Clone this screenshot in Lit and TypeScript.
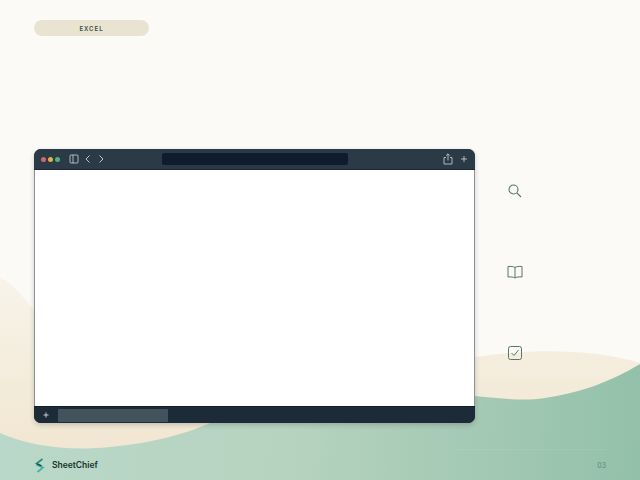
import { LitElement, html, css, svg } from "lit";
import { customElement } from "lit/decorators.js";

@customElement("app-root")
export class AppRoot extends LitElement {
  static styles = css`
    :host {
      display: block;
      position: relative;
      width: 640px;
      height: 480px;
      overflow: hidden;
      background: #fcfaf6;
      font-family: Inter, "Liberation Sans", sans-serif;
    }
    .bg { position: absolute; inset: 0; width: 640px; height: 480px; display: block; }
    .page { position: relative; display: flex; flex-direction: column; height: 480px; box-sizing: border-box; padding: 20px 34px 0; }
    .pill {
      width: 115px; height: 16px; border-radius: 8px; background: #e9e4d2;
      display: flex; align-items: center; justify-content: center;
      font-size: 6px; font-weight: 600; letter-spacing: 1px; color: #33503f;
    }
    .main { display: flex; margin-top: 113px; }
    .window {
      width: 441px; height: 274px; display: flex; flex-direction: column; flex: none;
      border-radius: 7px; overflow: hidden; background: #1d2a38;
      box-shadow: 0 2px 5px rgba(30, 45, 50, 0.22);
    }
    .top { height: 21px; flex: none; background: #2b3a47; display: flex; align-items: center; padding: 0 7px; border-bottom: 1px solid #1c2833; box-sizing: border-box; }
    .dots { display: flex; gap: 2px; }
    .dot { width: 5px; height: 5px; border-radius: 50%; }
    .red { background: #d9646c; }
    .yellow { background: #dfb24a; }
    .green { background: #4fb381; }
    .tools { display: flex; align-items: center; gap: 5px; margin-left: 9px; }
    .url { width: 186px; height: 12px; border-radius: 2px; background: #101c2c; margin-left: 57px; }
    .right { margin-left: auto; display: flex; align-items: center; gap: 7px; }
    .sheet { flex: 1; background: #fff; border-left: 1px solid #8b9295; border-right: 1px solid #8b9295; }
    .bottom { height: 17px; flex: none; background: #1d2a38; display: flex; align-items: center; padding: 0 0 0 9px; border-top: 1px solid #131d28; box-sizing: border-box; }
    .tab { width: 110px; height: 13px; background: #43535c; border-radius: 1px; margin-left: 9px; }
    svg { display: block; }
    .aside { display: flex; flex-direction: column; gap: 65px; margin: 34px 0 0 32px; }
    .footer { display: flex; align-items: center; margin-top: 34px; height: 16px; position: relative; }
    .brand { font-size: 8.5px; font-weight: 600; color: #14342b; margin-left: 6px; }
    .rule { position: absolute; left: 421px; right: 0; top: -8px; height: 1px; background: rgba(255, 255, 255, 0.07); }
    .num { margin-left: auto; font-size: 7px; color: #5f8a78; }
  `;

  private background() {
    return svg`<svg class="bg" viewBox="0 0 640 480" aria-hidden="true">
      <defs>
        <linearGradient id="cream" gradientUnits="userSpaceOnUse" x1="0" y1="277" x2="0" y2="450">
          <stop offset="0" stop-color="#f8f4ea" /><stop offset="1" stop-color="#f1e6d1" />
        </linearGradient>
        <linearGradient id="mint" gradientUnits="userSpaceOnUse" x1="0" y1="420" x2="640" y2="470">
          <stop offset="0" stop-color="#bad8c9" /><stop offset="0.45" stop-color="#b6d3bf" /><stop offset="1" stop-color="#93c0a9" />
        </linearGradient>
      </defs>
      <path fill="url(#cream)" d="M0 277C28 292 50 340 90 372C180 395 380 372 475 357C530 349 590 348 640 363V480H0Z" />
      <path fill="url(#mint)" d="M0 433C32 447 70 451 110 447C160 442 190 432 215 421C300 390 410 389 475 396C505 399 525 401 545 398C580 393 610 382 640 364V480H0Z" />
    </svg>`;
  }

  render() {
    const s = "#cdd5d9";
    const ic = "#55776a";
    return html`
      ${this.background()}
      <div class="page">
        <div class="pill">EXCEL</div>
        <div class="main">
          <div class="window">
            <div class="top">
              <div class="dots"><i class="dot red"></i><i class="dot yellow"></i><i class="dot green"></i></div>
              <div class="tools">
                <svg width="10" height="10" viewBox="0 0 10 10" fill="none" stroke=${s} stroke-width="0.8"><rect x="1" y="1" width="8" height="8" rx="1" /><path d="M4 1V9" /></svg>
                <svg width="8" height="10" viewBox="0 0 8 10" fill="none" stroke=${s} stroke-width="0.9"><path d="M5.5 1.5L2 5L5.5 8.5" /></svg>
                <svg width="8" height="10" viewBox="0 0 8 10" fill="none" stroke=${s} stroke-width="0.9"><path d="M2.5 1.5L6 5L2.5 8.5" /></svg>
              </div>
              <div class="url"></div>
              <div class="right">
                <svg width="10" height="12" viewBox="0 0 10 12" fill="none" stroke=${s} stroke-width="0.8"><path d="M3 4.5H1V11H9V4.5H7M5 7.5V1M3.2 2.6L5 0.8L6.8 2.6" /></svg>
                <svg width="8" height="8" viewBox="0 0 8 8" fill="none" stroke=${s} stroke-width="0.8"><path d="M4 1V7M1 4H7" /></svg>
              </div>
            </div>
            <div class="sheet"></div>
            <div class="bottom">
              <svg width="6" height="6" viewBox="0 0 6 6" fill="none" stroke="#d5dbdd" stroke-width="0.9"><path d="M3 0.5V5.5M0.5 3H5.5" /></svg>
              <div class="tab"></div>
            </div>
          </div>
          <div class="aside">
            <svg width="16" height="16" viewBox="0 0 16 16" fill="none" stroke=${ic} stroke-width="1.1"><circle cx="6.5" cy="6.5" r="4.5" /><path d="M10 10L14 14" /></svg>
            <svg width="16" height="16" viewBox="0 0 16 16" fill="none" stroke=${ic} stroke-width="1"><path d="M8 3.5C6.5 2.5 4 2.2 1 2.5V13C4 12.7 6.5 13 8 14C9.5 13 12 12.7 15 13V2.5C12 2.2 9.5 2.5 8 3.5ZM8 3.5V14" /></svg>
            <svg width="16" height="16" viewBox="0 0 16 16" fill="none" stroke=${ic} stroke-width="1"><rect x="1.5" y="1.5" width="13" height="13" rx="2" /><path d="M4.5 8L7 10.5L11.5 5" /></svg>
          </div>
        </div>
        <div class="footer">
          <div class="rule"></div>
          <svg width="12" height="15" viewBox="0 0 12 15" fill="none" stroke-width="1.8">
            <path d="M8.5 1L2.5 5.5L7.5 8" stroke="#2f8f7d" />
            <path d="M2.5 7L9 9.5L3.5 14" stroke="#45b3a6" />
            <path d="M3 5.8L7.5 8" stroke="#1f4d42" stroke-width="1.3" />
          </svg>
          <span class="brand">SheetChief</span>
          <span class="num">03</span>
        </div>
      </div>
    `;
  }
}
